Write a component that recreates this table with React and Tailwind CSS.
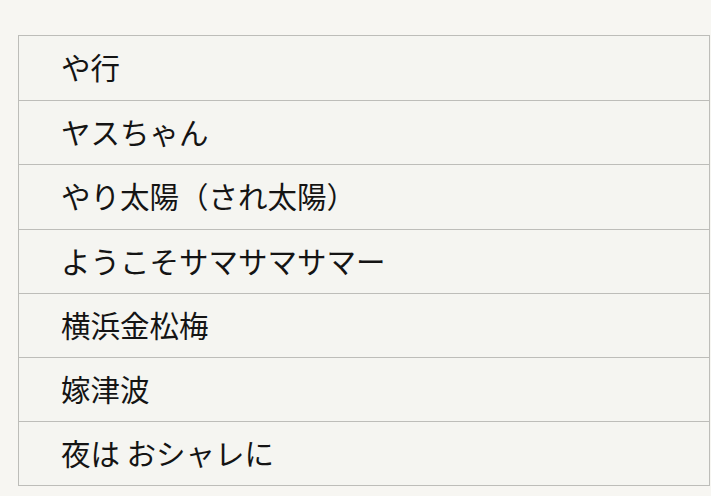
const rows = [
  'や行',
  'ヤスちゃん',
  'やり太陽（され太陽）',
  'ようこそサマサマサマー',
  '横浜金松梅',
  '嫁津波',
  '夜は おシャレに',
];

const App = () => {
  return (
    <div className="w-[711px] h-[496px] bg-[#f7f6f2] pt-[35px] pl-[18px] pr-[1px] overflow-hidden">
      <div className="border border-[#bdbdb9] bg-[#f5f5f1]">
        {rows.map((row, i) => (
          <div
            key={i}
            className={`h-[64.2px] flex items-center pl-[42px] pb-[3px] text-[29.5px] text-[#141414] ${i > 0 ? 'border-t border-[#bdbdb9]' : ''}`}
            style={{ fontFamily: '"Noto Sans CJK JP", "Noto Sans", sans-serif' }}
          >
            {row}
          </div>
        ))}
      </div>
    </div>
  );
};

export default App;
